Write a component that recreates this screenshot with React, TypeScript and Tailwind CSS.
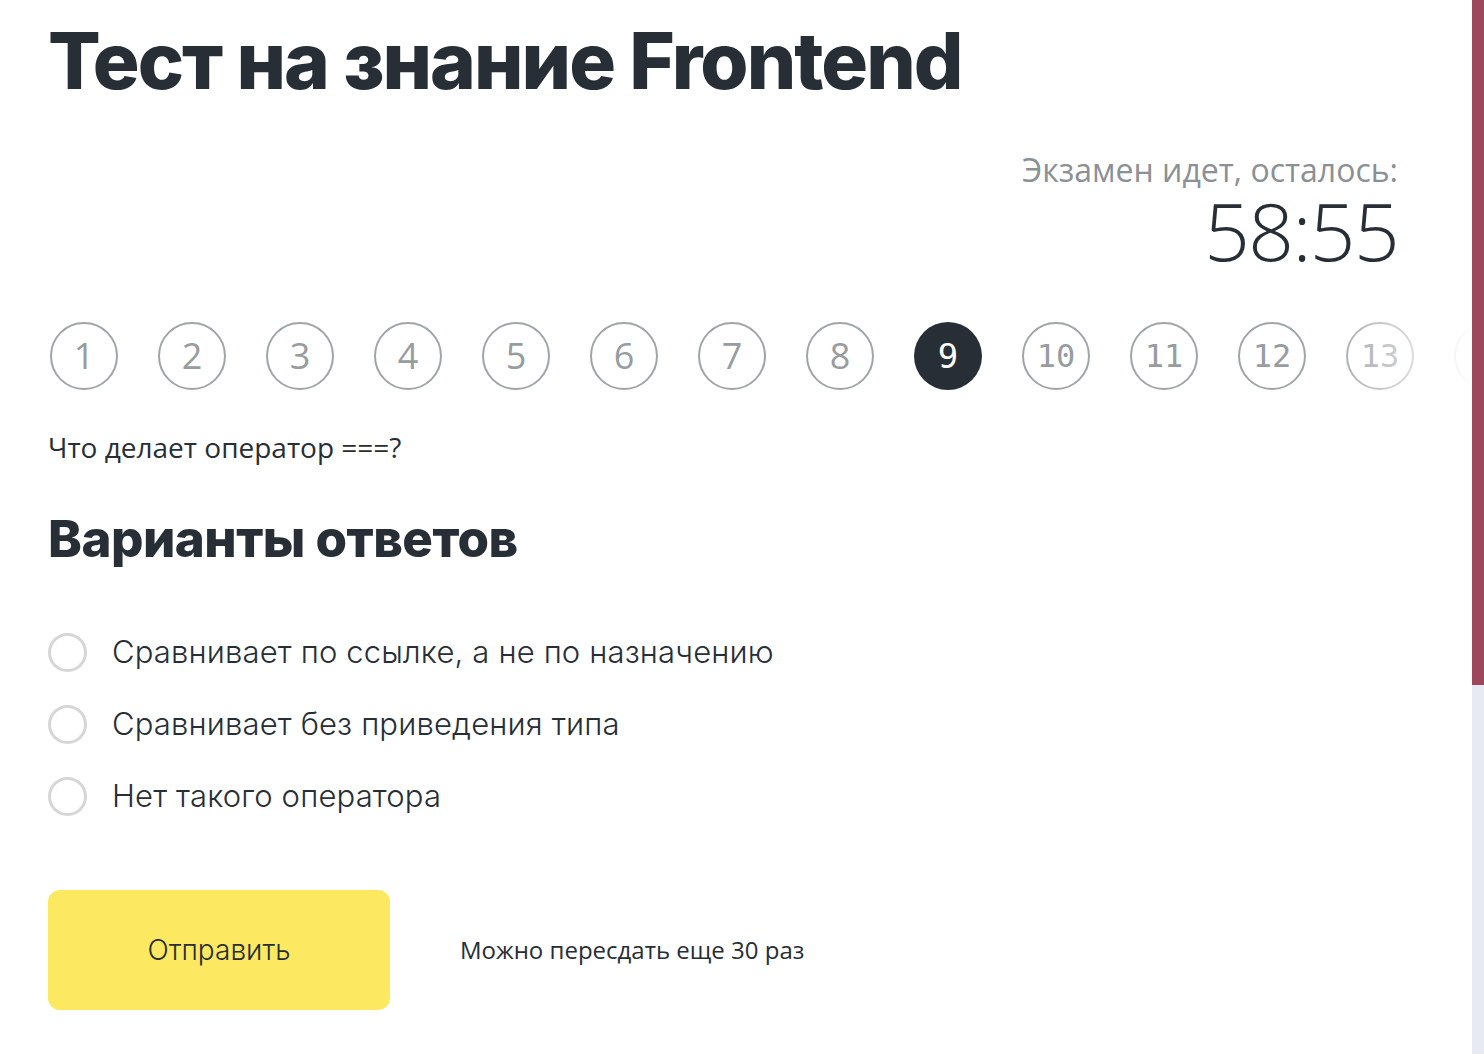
import React from 'react';

const questions = Array.from({ length: 14 }, (_, i) => i + 1);

const answers = [
  'Сравнивает по ссылке, а не по назначению',
  'Сравнивает без приведения типа',
  'Нет такого оператора',
];

export default function App() {
  const current = 9;

  return (
    <div className="flex min-h-[1054px] bg-white">
      <div className="flex-1 min-w-0 pl-12 pt-[22px]">
        <h1 className="font-['Inter',sans-serif] font-extrabold text-[78px] leading-none tracking-[-0.025em] text-[#272e36]">
          Тест на знание Frontend
        </h1>

        {/* timer */}
        <div className="mt-[50px] pr-[74px] text-right font-['Open_Sans',sans-serif]">
          <div className="text-[32px] leading-[40px] text-[#8b9094]">Экзамен идет, осталось:</div>
          <div className="text-[80px] leading-[80px] font-light tracking-[-0.02em] text-[#272e36]">58:55</div>
        </div>

        {/* question pager */}
        <div className="relative mt-[52px] overflow-hidden">
          <div className="flex gap-10 pl-[2px]">
            {questions.map((n) => (
              <div
                key={n}
                className={
                  n === current
                    ? "flex h-[68px] w-[68px] shrink-0 items-center justify-center rounded-full bg-[#272e36] text-white font-['DejaVu_Sans_Mono',monospace] text-[34px]"
                    : n < current
                    ? "flex h-[68px] w-[68px] shrink-0 items-center justify-center rounded-full border-2 border-[#a0a5a8] text-[#979c9f] font-['Open_Sans',sans-serif] text-[36px]"
                    : "flex h-[68px] w-[68px] shrink-0 items-center justify-center rounded-full border-2 border-[#a0a5a8] text-[#979c9f] font-['DejaVu_Sans_Mono',monospace] text-[32px]"
                }
              >
                {n}
              </div>
            ))}
          </div>
          <div className="pointer-events-none absolute inset-y-0 right-0 w-[150px] bg-gradient-to-r from-white/0 to-white" />
        </div>

        <p className="mt-[38px] font-['Open_Sans',sans-serif] text-[28px] leading-[38px] text-[#272e36]">
          Что делает оператор ===?
        </p>

        <h2 className="mt-[47px] font-['Inter',sans-serif] font-extrabold text-[51px] leading-none tracking-[-0.01em] text-[#272e36]">
          Варианты ответов
        </h2>

        <div className="mt-[68px] flex flex-col gap-[32px]">
          {answers.map((a) => (
            <label key={a} className="flex items-center gap-[25px] cursor-pointer">
              <span className="h-[39px] w-[39px] shrink-0 rounded-full border-[3px] border-[#d6d6d6]" />
              <span className="font-['Inter',sans-serif] font-light text-[31px] leading-[40px] tracking-[0.005em] text-[#272e36]">{a}</span>
            </label>
          ))}
        </div>

        <div className="mt-[74px] flex items-center">
          <button className="h-[120px] w-[342px] rounded-xl bg-[#fce961] font-['Inter',sans-serif] font-light text-[28px] text-[#272e36]">
            Отправить
          </button>
          <span className="ml-[70px] font-['Open_Sans',sans-serif] text-[24px] text-[#272e36]">
            Можно пересдать еще 30 раз
          </span>
        </div>
      </div>

      {/* scrollbar */}
      <div className="flex w-3 shrink-0 flex-col">
        <div className="h-[685px] bg-[#9c475b]" />
        <div className="flex-1 bg-[#e8eaf3]" />
      </div>
    </div>
  );
}
